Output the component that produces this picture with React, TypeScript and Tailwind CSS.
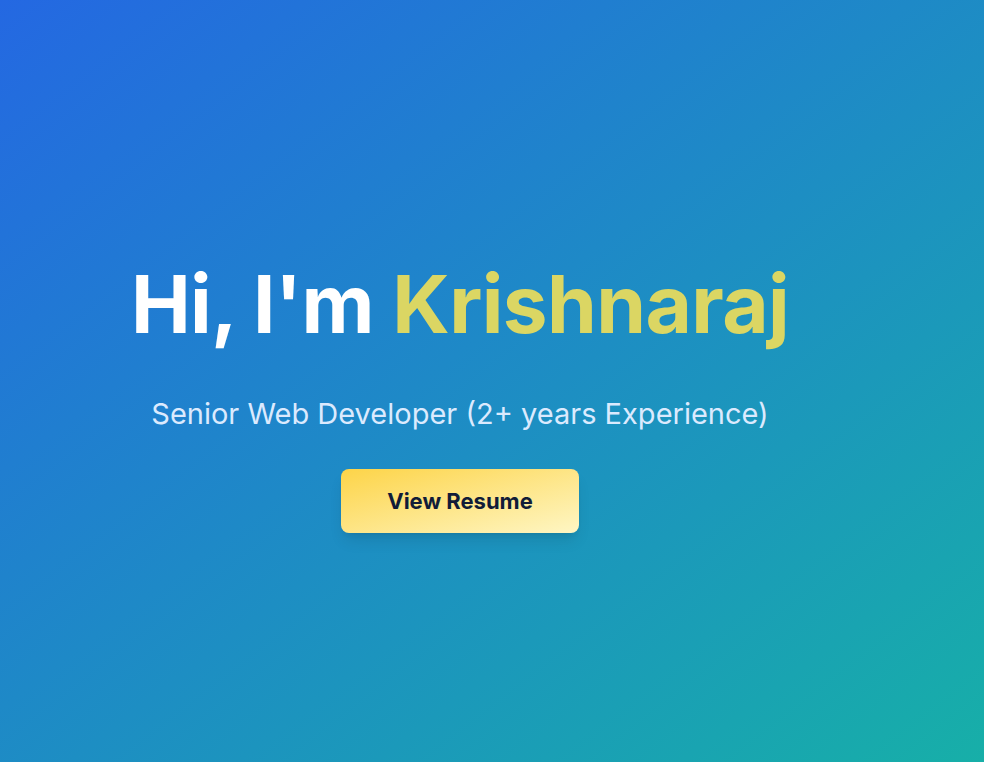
export default function App() {
  return (
    <section
      className="min-h-screen w-full bg-linear-to-br/srgb from-[#2468e2] to-[#17afa8] flex flex-col items-center pr-16 pt-[256px]"
      style={{ fontFamily: "Inter, 'Noto Sans', sans-serif" }}
    >
      <h1 className="text-[80px] leading-[96px] font-bold text-white tracking-[-0.6px]">
        Hi, I'm <span className="text-[#dbd663]">Krishnaraj</span>
      </h1>
      <p className="mt-[44px] text-[29px] leading-[36px] text-[#dbeafe]">
        Senior Web Developer (2+ years Experience)
      </p>
      <button className="mt-[37px] w-[238px] h-[64px] rounded-lg bg-linear-to-br/srgb from-[#fdd448] to-[#fef6c4] text-[#111c38] text-[22px] font-bold shadow-lg">
        View Resume
      </button>
    </section>
  );
}
